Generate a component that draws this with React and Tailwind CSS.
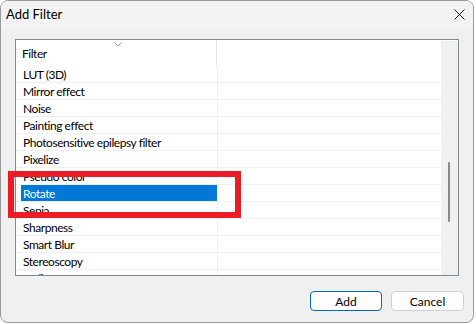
import React from "react";

const filters = [
  "LUT (3D)",
  "Mirror effect",
  "Noise",
  "Painting effect",
  "Photosensitive epilepsy filter",
  "Pixelize",
  "Pseudo color",
  "Rotate",
  "Sepia",
  "Sharpness",
  "Smart Blur",
  "Stereoscopy",
  "Stylize",
];

const FilterRow = ({ name, selected }) => (
  <div className="flex h-[17px] shrink-0 border-b border-[#f0f0f0]">
    <div className="flex w-[202px] border-r border-[#f0f0f0] pl-[5px]">
      <div
        className={
          selected
            ? "flex flex-1 items-center bg-[#0078d7] pl-[2px] pt-px text-white"
            : "flex flex-1 items-center pl-[2px] pt-px text-black"
        }
      >
        {name}
      </div>
    </div>
    <div className="flex-1" />
  </div>
);

export default function App() {
  return (
    <div
      className="relative h-[324px] w-[476px] bg-white text-[12px] leading-none"
      style={{ fontFamily: 'Lato, "Noto Sans", sans-serif' }}
    >
      <div className="flex h-[323px] w-[474px] flex-col overflow-hidden rounded-[8px] border border-[#9a9a9a] bg-[#f0f0f0]">
        {/* title bar */}
        <div className="flex h-[27px] shrink-0 items-center justify-between bg-[#f3f3f3] pl-[5px] pr-[8px]">
          <span className="text-[13px] text-black">Add Filter</span>
          <svg width="11" height="11" viewBox="0 0 11 11">
            <path d="M0.5 0.5 L10.5 10.5 M10.5 0.5 L0.5 10.5" stroke="#1a1a1a" strokeWidth="1" />
          </svg>
        </div>

        {/* list */}
        <div className="ml-[14px] mt-[11px] flex h-[237px] w-[444px] shrink-0 border border-[#828790] bg-white tracking-[-0.45px]">
          <div className="flex flex-1 flex-col overflow-hidden">
            <div className="relative flex h-[26px] shrink-0">
              <div className="flex w-[201px] items-center border-r border-[#e5e5e5] pl-[6px] pt-px">Filter</div>
              <svg className="absolute left-[98px] top-[2px]" width="8" height="5" viewBox="0 0 8 5">
                <path d="M0.5 0.5 L4 4 L7.5 0.5" stroke="#9a9a9a" fill="none" strokeWidth="1" />
              </svg>
            </div>
            {filters.map((name) => (
              <FilterRow key={name} name={name} selected={name === "Rotate"} />
            ))}
          </div>
          <div className="flex w-[17px] flex-col border-t border-white bg-[#f0f0f0] pl-[7px] pt-[121px]">
            <div className="h-[60px] w-[2px] rounded-full bg-[#8a8a8a]" />
          </div>
        </div>

        {/* buttons */}
        <div className="mt-[15px] flex justify-end gap-[9px] pr-[9px]">
          <button className="flex h-[20px] w-[72px] items-center justify-center rounded-[4px] border border-[#0067c0] bg-[#fdfdfd] pt-px text-black">
            Add
          </button>
          <button className="flex h-[20px] w-[73px] items-center justify-center rounded-[4px] border border-[#d0d0d0] bg-[#fdfdfd] pt-px text-black">
            Cancel
          </button>
        </div>
      </div>

      {/* annotation */}
      <div className="absolute left-[8px] top-[171px] h-[47px] w-[233px] border-[6px] border-[#ed1c24]" />
    </div>
  );
}
